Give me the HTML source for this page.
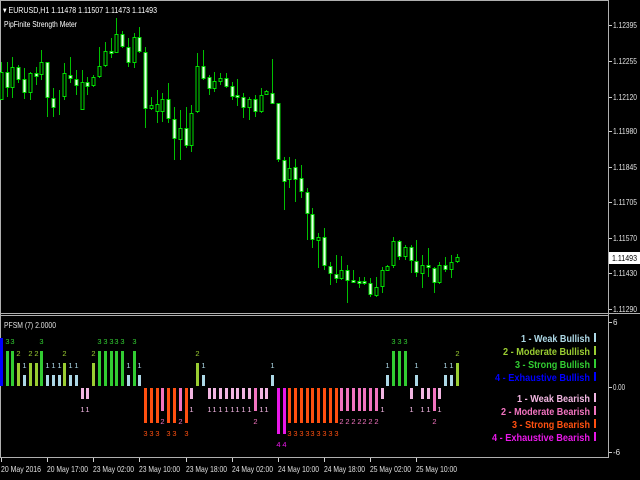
<!DOCTYPE html>
<html><head><meta charset="utf-8"><style>
html,body{margin:0;padding:0;background:#000;width:640px;height:480px;overflow:hidden}
svg{display:block}
text{font-family:"Liberation Sans",sans-serif}
</style></head><body>
<svg width="640" height="480" viewBox="0 0 640 480" xmlns="http://www.w3.org/2000/svg">
<rect width="640" height="480" fill="#000"/>
<!-- frames -->
<g stroke="#b0b0b0" stroke-width="1" fill="none">
<line x1="0.5" y1="0" x2="0.5" y2="458"/>
<line x1="0" y1="0.5" x2="609" y2="0.5"/>
<line x1="608.5" y1="0" x2="608.5" y2="458"/>
<line x1="0" y1="313.5" x2="640" y2="313.5"/>
<line x1="0" y1="315.5" x2="609" y2="315.5"/>
<line x1="0" y1="457.5" x2="609" y2="457.5"/>
</g>
<!-- price axis -->
<g fill="#e0e0e0" font-size="8" lengthAdjust="spacingAndGlyphs">
<text x="613" y="28" textLength="24" lengthAdjust="spacingAndGlyphs">1.12395</text>
<text x="613" y="64" textLength="24" lengthAdjust="spacingAndGlyphs">1.12255</text>
<text x="613" y="100" textLength="24" lengthAdjust="spacingAndGlyphs">1.12120</text>
<text x="613" y="134" textLength="24" lengthAdjust="spacingAndGlyphs">1.11980</text>
<text x="613" y="170" textLength="24" lengthAdjust="spacingAndGlyphs">1.11845</text>
<text x="613" y="205" textLength="24" lengthAdjust="spacingAndGlyphs">1.11705</text>
<text x="613" y="241" textLength="24" lengthAdjust="spacingAndGlyphs">1.11570</text>
<text x="613" y="276" textLength="24" lengthAdjust="spacingAndGlyphs">1.11430</text>
<text x="613" y="312" textLength="24" lengthAdjust="spacingAndGlyphs">1.11290</text>
<text x="613" y="325">6</text>
<text x="613" y="390" textLength="12" lengthAdjust="spacingAndGlyphs">0.00</text>
<text x="613" y="455">-6</text>
</g>
<g stroke="#d0d0d0"><path d="M609 25.5h3M609 61.5h3M609 97.5h3M609 131.5h3M609 167.5h3M609 202.5h3M609 238.5h3M609 273.5h3M609 309.5h3M609 322.5h3M609 387.5h3M609 452.5h3"/></g>
<rect x="609" y="252" width="31" height="12" fill="#fff"/>
<text x="612" y="261" font-size="8" fill="#000" textLength="25" lengthAdjust="spacingAndGlyphs">1.11493</text>
<!-- header -->
<text x="3" y="13" font-size="8.5" fill="#fff" textLength="154" lengthAdjust="spacingAndGlyphs">▾ EURUSD,H1  1.11478 1.11507 1.11473 1.11493</text>
<text x="4" y="27" font-size="8" fill="#fff" textLength="73" lengthAdjust="spacingAndGlyphs">PipFinite Strength Meter</text>
<text x="4" y="328" font-size="8" fill="#e0e0e0" textLength="52" lengthAdjust="spacingAndGlyphs">PFSM (7) 2.0000</text>
<!-- wicks -->
<path stroke="#00c000" stroke-width="1" fill="none" d="M1.5 62V100M7.5 62V97M12.5 57V98M18.5 65V83M24.5 68V99M30.5 72V100M36.5 67V85M41.5 50V80M47.5 62V117M53.5 88V117M59.5 90V115M64.5 63V100M70.5 57V83M76.5 70V95M82.5 70V110M87.5 77V95M93.5 75V87M99.5 47V78M105.5 42V67M111.5 38V58M116.5 18V53M122.5 31V48M128.5 38V67M134.5 33V68M139.5 27V53M145.5 47V128M151.5 97V110M157.5 90V123M162.5 93V122M168.5 83V123M174.5 107V160M180.5 110V160M186.5 107V148M191.5 105V152M197.5 53V113M203.5 50V80M209.5 75V95M214.5 72V92M220.5 73V85M226.5 73V88M232.5 82V100M237.5 79V106M243.5 93V118M249.5 97V120M255.5 95V117M261.5 88V113M266.5 90V95M272.5 59V104M278.5 103V162M284.5 157V210M289.5 157V188M295.5 159V202M301.5 165V198M307.5 188V240M312.5 208V248M318.5 233V268M324.5 228V270M330.5 262V285M336.5 255V283M341.5 256V280M347.5 265V303M353.5 270V283M359.5 277V288M364.5 277V285M370.5 278V297M376.5 277V297M382.5 267V293M387.5 265V271M393.5 237V268M399.5 240V260M405.5 245V260M411.5 245V273M416.5 240V277M422.5 255V288M428.5 248V277M434.5 267V293M439.5 262V284M445.5 257V272M451.5 255V278M457.5 254V263"/>
<!-- bodies: hollow (bullish) -->
<g fill="#000" stroke="#00e000" stroke-width="1">
<rect x="0" y="72.5" width="3" height="27"/><rect x="11" y="67.5" width="3" height="20"/><rect x="29" y="73.5" width="3" height="19"/><rect x="40" y="62.5" width="3" height="12"/><rect x="63" y="73.5" width="3" height="23"/><rect x="81" y="82.5" width="3" height="27"/><rect x="92" y="77.5" width="3" height="8"/><rect x="98" y="66.5" width="3" height="10"/><rect x="104" y="51.5" width="3" height="14"/><rect x="115" y="34.5" width="3" height="18"/><rect x="133" y="37.5" width="3" height="25"/><rect x="150" y="105.5" width="3" height="3"/><rect x="156" y="104.5" width="3" height="7"/><rect x="161" y="99.5" width="3" height="12"/><rect x="179" y="128.5" width="3" height="11"/><rect x="190" y="113.5" width="3" height="32"/><rect x="196" y="66.5" width="3" height="45"/><rect x="213" y="81.5" width="3" height="7"/><rect x="219" y="78.5" width="3" height="3"/><rect x="248" y="99.5" width="3" height="8"/><rect x="260" y="95.5" width="3" height="16"/><rect x="265" y="91.5" width="3" height="3"/><rect x="288" y="168.5" width="3" height="11"/><rect x="317" y="237.5" width="3" height="3"/><rect x="340" y="270.5" width="3" height="8"/><rect x="375" y="287.5" width="3" height="8"/><rect x="381" y="270.5" width="3" height="16"/><rect x="386" y="266.5" width="3" height="4"/><rect x="392" y="241.5" width="3" height="24"/><rect x="404" y="247.5" width="3" height="9"/><rect x="421" y="265.5" width="3" height="8"/><rect x="438" y="265.5" width="3" height="17"/><rect x="450" y="262.5" width="3" height="7"/><rect x="456" y="257.5" width="3" height="4"/>
</g>
<!-- bodies: filled (bearish) -->
<g fill="#eaffea" stroke="#00e000" stroke-width="1">
<rect x="6" y="72.5" width="3" height="15"/><rect x="17" y="67.5" width="3" height="12"/><rect x="23" y="79.5" width="3" height="13"/><rect x="35" y="73.5" width="3" height="3"/><rect x="46" y="62.5" width="3" height="35"/><rect x="52" y="98.5" width="3" height="9"/><rect x="69" y="75.5" width="3" height="3"/><rect x="75" y="79.5" width="3" height="6"/><rect x="86" y="82.5" width="3" height="4"/><rect x="110" y="51.5" width="3" height="2"/><rect x="121" y="34.5" width="3" height="12"/><rect x="127" y="47.5" width="3" height="15"/><rect x="138" y="37.5" width="3" height="14"/><rect x="144" y="52.5" width="3" height="56"/><rect x="167" y="99.5" width="3" height="19"/><rect x="173" y="119.5" width="3" height="19"/><rect x="185" y="128.5" width="3" height="17"/><rect x="202" y="66.5" width="3" height="12"/><rect x="208" y="77.5" width="3" height="11"/><rect x="225" y="78.5" width="3" height="8"/><rect x="231" y="86.5" width="3" height="10"/><rect x="236" y="95.5" width="3" height="2"/><rect x="242" y="97.5" width="3" height="10"/><rect x="254" y="99.5" width="3" height="12"/><rect x="271" y="93.5" width="3" height="10"/><rect x="277" y="103.5" width="3" height="56"/><rect x="283" y="160.5" width="3" height="21"/><rect x="294" y="167.5" width="3" height="12"/><rect x="300" y="178.5" width="3" height="13"/><rect x="306" y="192.5" width="3" height="21"/><rect x="311" y="214.5" width="3" height="25"/><rect x="323" y="237.5" width="3" height="28"/><rect x="329" y="266.5" width="3" height="7"/><rect x="335" y="274.5" width="3" height="4"/><rect x="346" y="270.5" width="3" height="10"/><rect x="352" y="280.5" width="3" height="2"/><rect x="358" y="281.5" width="3" height="2"/><rect x="363" y="281.5" width="3" height="2"/><rect x="369" y="283.5" width="3" height="11"/><rect x="398" y="241.5" width="3" height="15"/><rect x="410" y="247.5" width="3" height="13"/><rect x="415" y="261.5" width="3" height="11"/><rect x="427" y="265.5" width="3" height="2"/><rect x="433" y="268.5" width="3" height="14"/><rect x="444" y="265.5" width="3" height="4"/>
</g>
<!-- histogram -->
<g>
<rect x="0" y="338" width="3" height="48" fill="#0000ff"/>
<g fill="#32cd32"><rect x="6" y="351" width="3" height="35"/><rect x="11" y="351" width="3" height="35"/><rect x="40" y="351" width="3" height="35"/><rect x="98" y="351" width="3" height="35"/><rect x="104" y="351" width="3" height="35"/><rect x="110" y="351" width="3" height="35"/><rect x="115" y="351" width="3" height="35"/><rect x="121" y="351" width="3" height="35"/><rect x="133" y="351" width="3" height="35"/><rect x="392" y="351" width="3" height="35"/><rect x="398" y="351" width="3" height="35"/><rect x="404" y="351" width="3" height="35"/></g>
<g fill="#9acd32"><rect x="17" y="363" width="3" height="23"/><rect x="29" y="363" width="3" height="23"/><rect x="35" y="363" width="3" height="23"/><rect x="63" y="363" width="3" height="23"/><rect x="92" y="363" width="3" height="23"/><rect x="196" y="363" width="3" height="23"/><rect x="456" y="363" width="3" height="23"/></g>
<g fill="#add8e6"><rect x="23" y="375" width="3" height="11"/><rect x="46" y="375" width="3" height="11"/><rect x="52" y="375" width="3" height="11"/><rect x="58" y="375" width="3" height="11"/><rect x="69" y="375" width="3" height="11"/><rect x="75" y="375" width="3" height="11"/><rect x="127" y="375" width="3" height="11"/><rect x="138" y="375" width="3" height="11"/><rect x="202" y="375" width="3" height="11"/><rect x="271" y="375" width="3" height="11"/><rect x="386" y="375" width="3" height="11"/><rect x="415" y="375" width="3" height="11"/><rect x="444" y="375" width="3" height="11"/><rect x="450" y="375" width="3" height="11"/></g>
<g fill="#f2b6e2"><rect x="81" y="388" width="3" height="11"/><rect x="86" y="388" width="3" height="11"/><rect x="190" y="388" width="3" height="11"/><rect x="208" y="388" width="3" height="11"/><rect x="213" y="388" width="3" height="11"/><rect x="219" y="388" width="3" height="11"/><rect x="225" y="388" width="3" height="11"/><rect x="231" y="388" width="3" height="11"/><rect x="236" y="388" width="3" height="11"/><rect x="242" y="388" width="3" height="11"/><rect x="248" y="388" width="3" height="11"/><rect x="260" y="388" width="3" height="11"/><rect x="265" y="388" width="3" height="11"/><rect x="381" y="388" width="3" height="11"/><rect x="410" y="388" width="3" height="11"/><rect x="421" y="388" width="3" height="11"/><rect x="427" y="388" width="3" height="11"/><rect x="438" y="388" width="3" height="11"/></g>
<g fill="#f274c0"><rect x="161" y="388" width="3" height="23"/><rect x="179" y="388" width="3" height="23"/><rect x="254" y="388" width="3" height="23"/><rect x="340" y="388" width="3" height="23"/><rect x="346" y="388" width="3" height="23"/><rect x="352" y="388" width="3" height="23"/><rect x="358" y="388" width="3" height="23"/><rect x="363" y="388" width="3" height="23"/><rect x="369" y="388" width="3" height="23"/><rect x="375" y="388" width="3" height="23"/><rect x="433" y="388" width="3" height="23"/></g>
<g fill="#ff5010"><rect x="144" y="388" width="3" height="35"/><rect x="150" y="388" width="3" height="35"/><rect x="156" y="388" width="3" height="35"/><rect x="167" y="388" width="3" height="35"/><rect x="173" y="388" width="3" height="35"/><rect x="185" y="388" width="3" height="35"/><rect x="288" y="388" width="3" height="35"/><rect x="294" y="388" width="3" height="35"/><rect x="300" y="388" width="3" height="35"/><rect x="306" y="388" width="3" height="35"/><rect x="311" y="388" width="3" height="35"/><rect x="317" y="388" width="3" height="35"/><rect x="323" y="388" width="3" height="35"/><rect x="329" y="388" width="3" height="35"/><rect x="335" y="388" width="3" height="35"/></g>
<g fill="#e818e8"><rect x="277" y="388" width="3" height="46"/><rect x="283" y="388" width="3" height="46"/></g>
</g>
<!-- histogram labels -->
<g font-size="7.5" text-anchor="middle">
<g fill="#32cd32"><text x="7.5" y="344">3</text><text x="12.5" y="344">3</text><text x="41.5" y="344">3</text><text x="99.5" y="344">3</text><text x="105.5" y="344">3</text><text x="111.5" y="344">3</text><text x="116.5" y="344">3</text><text x="122.5" y="344">3</text><text x="134.5" y="344">3</text><text x="393.5" y="344">3</text><text x="399.5" y="344">3</text><text x="405.5" y="344">3</text></g>
<g fill="#9acd32"><text x="18.5" y="356">2</text><text x="30.5" y="356">2</text><text x="36.5" y="356">2</text><text x="64.5" y="356">2</text><text x="93.5" y="356">2</text><text x="197.5" y="356">2</text><text x="457.5" y="356">2</text></g>
<g fill="#add8e6"><text x="24.5" y="368">1</text><text x="47.5" y="368">1</text><text x="53.5" y="368">1</text><text x="59.5" y="368">1</text><text x="70.5" y="368">1</text><text x="76.5" y="368">1</text><text x="128.5" y="368">1</text><text x="139.5" y="368">1</text><text x="203.5" y="368">1</text><text x="272.5" y="368">1</text><text x="387.5" y="368">1</text><text x="416.5" y="368">1</text><text x="445.5" y="368">1</text><text x="451.5" y="368">1</text></g>
<g fill="#f2b6e2"><text x="82.5" y="412">1</text><text x="87.5" y="412">1</text><text x="191.5" y="412">1</text><text x="209.5" y="412">1</text><text x="214.5" y="412">1</text><text x="220.5" y="412">1</text><text x="226.5" y="412">1</text><text x="232.5" y="412">1</text><text x="237.5" y="412">1</text><text x="243.5" y="412">1</text><text x="249.5" y="412">1</text><text x="261.5" y="412">1</text><text x="266.5" y="412">1</text><text x="382.5" y="412">1</text><text x="411.5" y="412">1</text><text x="422.5" y="412">1</text><text x="428.5" y="412">1</text><text x="439.5" y="412">1</text></g>
<g fill="#f274c0"><text x="162.5" y="424">2</text><text x="180.5" y="424">2</text><text x="255.5" y="424">2</text><text x="341.5" y="424">2</text><text x="347.5" y="424">2</text><text x="353.5" y="424">2</text><text x="359.5" y="424">2</text><text x="364.5" y="424">2</text><text x="370.5" y="424">2</text><text x="376.5" y="424">2</text><text x="434.5" y="424">2</text></g>
<g fill="#ff5010"><text x="145.5" y="436">3</text><text x="151.5" y="436">3</text><text x="157.5" y="436">3</text><text x="168.5" y="436">3</text><text x="174.5" y="436">3</text><text x="186.5" y="436">3</text><text x="289.5" y="436">3</text><text x="295.5" y="436">3</text><text x="301.5" y="436">3</text><text x="307.5" y="436">3</text><text x="312.5" y="436">3</text><text x="318.5" y="436">3</text><text x="324.5" y="436">3</text><text x="330.5" y="436">3</text><text x="336.5" y="436">3</text></g>
<g fill="#e818e8"><text x="278.5" y="447">4</text><text x="284.5" y="447">4</text></g>
</g>
<!-- legend -->
<g font-size="10.5" font-weight="bold">
<text x="521" y="342" fill="#add8e6" textLength="69" lengthAdjust="spacingAndGlyphs">1 - Weak Bullish</text>
<text x="503" y="355" fill="#9acd32" textLength="87" lengthAdjust="spacingAndGlyphs">2 - Moderate Bullish</text>
<text x="515" y="368" fill="#32cd32" textLength="75" lengthAdjust="spacingAndGlyphs">3 - Strong Bullish</text>
<text x="495" y="381" fill="#0000ff" textLength="95" lengthAdjust="spacingAndGlyphs">4 - Exhaustive Bullish</text>
<text x="517" y="402" fill="#f2b6e2" textLength="73" lengthAdjust="spacingAndGlyphs">1 - Weak Bearish</text>
<text x="501" y="415" fill="#f274c0" textLength="89" lengthAdjust="spacingAndGlyphs">2 - Moderate Bearish</text>
<text x="512" y="428" fill="#ff5010" textLength="78" lengthAdjust="spacingAndGlyphs">3 - Strong Bearish</text>
<text x="492" y="441" fill="#e818e8" textLength="98" lengthAdjust="spacingAndGlyphs">4 - Exhaustive Bearish</text>
</g>
<rect x="594" y="333" width="2" height="9" fill="#add8e6"/>
<rect x="594" y="346" width="2" height="9" fill="#9acd32"/>
<rect x="594" y="359" width="2" height="9" fill="#32cd32"/>
<rect x="594" y="372" width="2" height="9" fill="#0000ff"/>
<rect x="594" y="393" width="2" height="9" fill="#f2b6e2"/>
<rect x="594" y="406" width="2" height="9" fill="#f274c0"/>
<rect x="594" y="419" width="2" height="9" fill="#ff5010"/>
<rect x="594" y="432" width="2" height="9" fill="#e818e8"/>
<!-- time axis -->
<g stroke="#d0d0d0"><path d="M1.5 458v4M47.5 458v4M93.5 458v4M139.5 458v4M186.5 458v4M232.5 458v4M278.5 458v4M324.5 458v4M370.5 458v4M416.5 458v4"/></g>
<g font-size="8.5" fill="#e0e0e0">
<text x="1" y="472" textLength="40" lengthAdjust="spacingAndGlyphs">20 May 2016</text>
<text x="47" y="472" textLength="41" lengthAdjust="spacingAndGlyphs">20 May 17:00</text>
<text x="93" y="472" textLength="41" lengthAdjust="spacingAndGlyphs">23 May 02:00</text>
<text x="139" y="472" textLength="41" lengthAdjust="spacingAndGlyphs">23 May 10:00</text>
<text x="186" y="472" textLength="41" lengthAdjust="spacingAndGlyphs">23 May 18:00</text>
<text x="232" y="472" textLength="41" lengthAdjust="spacingAndGlyphs">24 May 02:00</text>
<text x="278" y="472" textLength="41" lengthAdjust="spacingAndGlyphs">24 May 10:00</text>
<text x="324" y="472" textLength="41" lengthAdjust="spacingAndGlyphs">24 May 18:00</text>
<text x="370" y="472" textLength="41" lengthAdjust="spacingAndGlyphs">25 May 02:00</text>
<text x="416" y="472" textLength="41" lengthAdjust="spacingAndGlyphs">25 May 10:00</text>
</g>
</svg>
</body></html>
